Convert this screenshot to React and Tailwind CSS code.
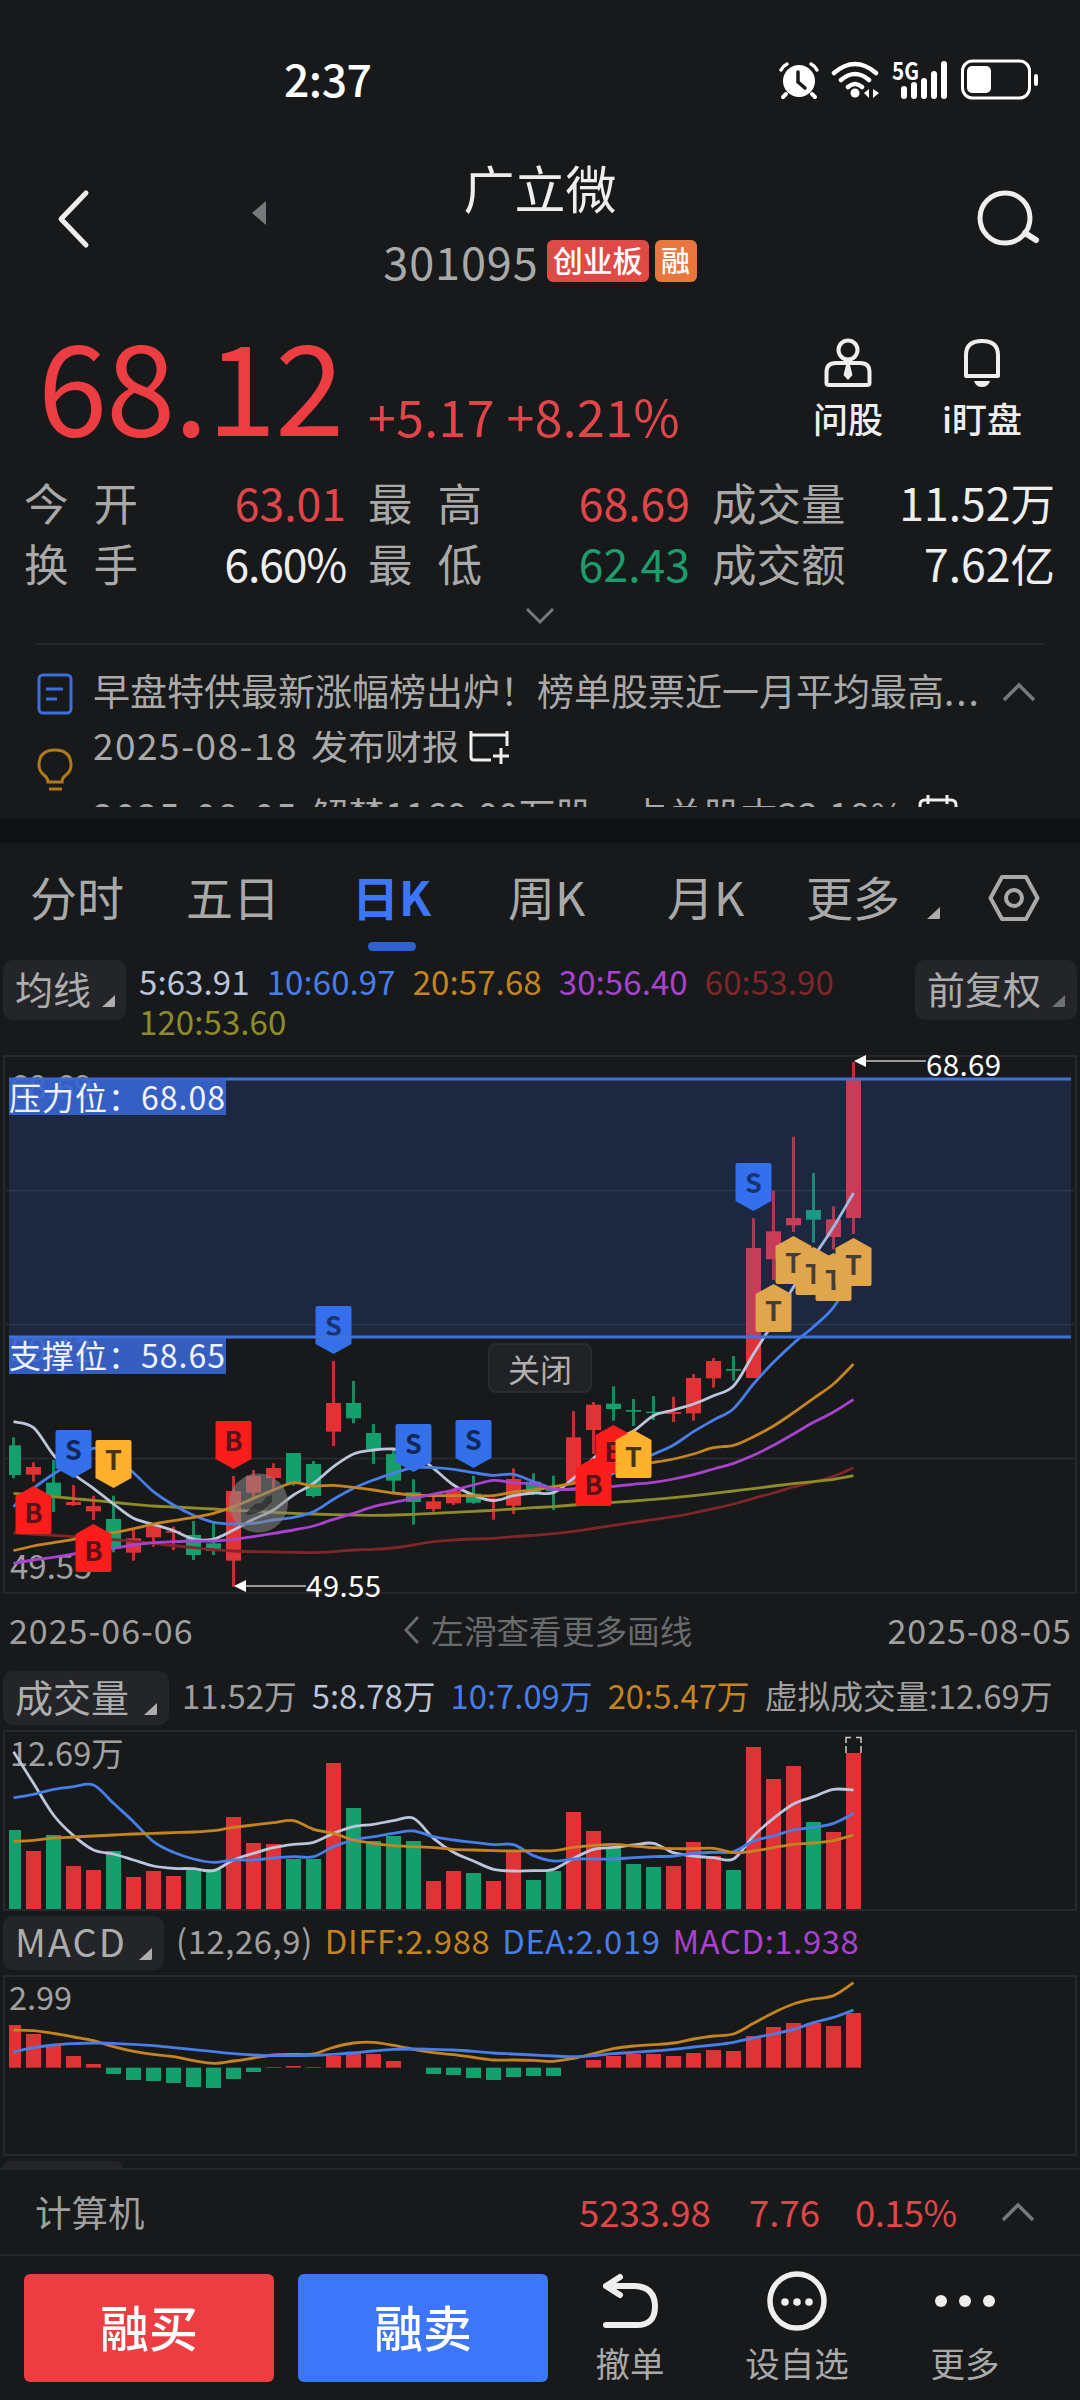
const RED = "#e03336"
const GREEN = "#14a06c"

const STEP = 20
const FIRST_X = 13.5
const xAt = (i) => FIRST_X + i * STEP

// [up, high, low, bodyTop, bodyBottom], thirds of a pixel like the lines below
const candles = [
  [0, 322, 445, 346, 435], [1, 397, 455, 411, 434], [0, 390, 546, 458, 502], [1, 465, 527, 516, 525],
  [1, 497, 570, 528, 544], [0, 497, 667, 567, 655], [1, 600, 692, 625, 668], [1, 580, 650, 588, 622],
  [1, 590, 660, 603, 608], [0, 573, 690, 615, 675], [0, 580, 675, 640, 663], [1, 438, 770, 483, 692],
  [1, 420, 505, 437, 488], [1, 400, 480, 414, 444], [0, 369, 467, 369, 460], [0, 393, 502, 402, 498],
  [1, 93, 348, 219, 305], [0, 153, 280, 219, 265], [0, 282, 402, 309, 358], [0, 360, 488, 372, 452],
  [0, 448, 584, 487, 516], [1, 500, 545, 514, 537], [1, 475, 525, 483, 520], [0, 437, 521, 491, 518],
  [1, 505, 569, 505, 510], [1, 415, 552, 447, 527], [0, 430, 495, 455, 492], [0, 437, 540, 478, 484],
  [1, 243, 456, 322, 456], [1, 216, 372, 224, 300], [0, 169, 272, 221, 237], [0, 207, 288, 240, 245],
  [0, 198, 270, 245, 249], [1, 200, 276, 246, 252], [1, 132, 272, 144, 250], [1, 84, 173, 93, 145],
  [0, 78, 152, 117, 122], [1, -335, 144, -246, 144], [1, -418, -150, -296, -212], [1, -580, -294, -336, -314],
  [0, -471, -262, -360, -331], [1, -371, -242, -332, -279], [1, -804, -288, -753, -336],
]

const averages = [
  {
    color: "#80262a",
    points: [608, 613, 616, 620, 624, 629, 634, 640, 647, 653, 659, 663, 665, 666, 667, 668, 665, 660, 658, 654, 645, 635, 630, 627, 625, 620, 616, 611, 604, 595, 586, 577, 569, 560, 549, 536, 522, 505, 489, 471, 456, 439, 413],
  },
  {
    color: "#8e8c2a",
    points: [490, 496, 500, 506, 511, 517, 523, 528, 531, 534, 537, 541, 543, 547, 550, 552, 554, 555, 556, 555, 553, 550, 547, 544, 541, 537, 533, 530, 525, 521, 517, 513, 508, 503, 497, 490, 483, 476, 468, 461, 455, 448, 437],
  },
  {
    color: "#bbc6dc",
    points: [275, 293, 375, 432, 475, 522, 565, 583, 602, 627, 627, 600, 568, 540, 495, 460, 410, 372, 360, 357, 370, 415, 465, 495, 512, 497, 489, 488, 445, 385, 330, 303, 257, 240, 222, 197, 168, 72, -24, -129, -219, -309, -411],
  },
  {
    color: "#477ee9",
    points: [530, 475, 432, 395, 355, 375, 428, 485, 525, 556, 577, 582, 580, 570, 562, 545, 508, 475, 450, 430, 413, 413, 418, 428, 436, 433, 455, 475, 477, 460, 430, 400, 373, 345, 305, 270, 236, 162, 97, 40, -10, -68, -165],
  },
  {
    color: "#c48420",
    points: [662, 648, 638, 628, 615, 608, 596, 582, 572, 562, 550, 530, 505, 480, 458, 468, 466, 472, 480, 489, 495, 497, 497, 497, 497, 486, 480, 470, 460, 445, 425, 405, 397, 387, 372, 353, 346, 320, 288, 248, 205, 162, 102],
  },
  {
    color: "#a843d0",
    points: [700, 690, 682, 672, 662, 655, 645, 638, 635, 633, 633, 628, 620, 610, 600, 588, 568, 550, 530, 517, 505, 492, 480, 465, 451, 458, 462, 477, 478, 474, 469, 463, 457, 447, 434, 417, 400, 376, 346, 312, 277, 246, 208],
  },
]

// [index, letter, y, direction]
const markers = [
  [1, "B", 436, "up"], [3, "S", 380, "down"], [4, "B", 474, "up"], [5, "T", 390, "down"],
  [11, "B", 371, "down"], [16, "S", 256, "down"], [20, "S", 374, "down"], [23, "S", 370, "down"],
  [30, "B", 375, "up"], [29, "B", 408, "up"], [31, "T", 380, "up"], [37, "S", 113, "down"],
  [38, "T", 234, "up"], [39, "T", 186, "up"], [40, "T", 197, "up"], [41, "T", 203, "up"], [42, "T", 188, "up"],
]

const markerColors = {
  B: ["#fb1d1c", "#5a1216"],
  S: ["#3370ea", "#12285a"],
  T: ["#ffb02c", "#46340f"],
}

const volumes = [
  [0, 510], [1, 573], [0, 525], [1, 618], [1, 630], [0, 573], [1, 651], [1, 633], [1, 648], [0, 630], [0, 627],
  [1, 471], [1, 549], [1, 552], [0, 597], [0, 597], [1, 309], [0, 444], [0, 543], [0, 528], [0, 543], [1, 663],
  [1, 633], [0, 639], [1, 663], [1, 576], [0, 660], [0, 633], [1, 456], [1, 513], [0, 562], [0, 612], [0, 621],
  [1, 618], [1, 546], [1, 588], [0, 630], [1, 261], [1, 357], [1, 318], [0, 486], [1, 516], [1, 279],
]

const volumeLines = [
  {
    color: "#bbc6dc",
    points: [275, 370, 465, 527, 570, 582, 600, 618, 625, 626, 632, 600, 580, 563, 553, 547, 520, 500, 493, 482, 475, 535, 577, 603, 628, 633, 632, 628, 595, 568, 562, 555, 550, 578, 588, 593, 597, 528, 475, 432, 410, 388, 390],
  },
  {
    color: "#477ee9",
    points: [413, 403, 388, 380, 375, 430, 485, 545, 577, 597, 607, 600, 600, 594, 590, 590, 560, 540, 530, 520, 513, 530, 540, 547, 554, 554, 587, 603, 597, 597, 597, 593, 590, 588, 580, 577, 575, 543, 528, 510, 502, 490, 460],
  },
  {
    color: "#c48420",
    points: [544, 541, 534, 531, 528, 525, 522, 520, 518, 516, 512, 502, 495, 488, 482, 508, 520, 540, 550, 557, 560, 563, 568, 570, 572, 573, 572, 572, 562, 556, 553, 558, 563, 566, 566, 565, 578, 573, 563, 553, 549, 542, 525],
  },
]

const histogram = [
  375, 402, 435, 468, 492, 522, 540, 543, 549, 561, 564, 537, 516, 501, 498, 501, 468, 455, 462, 483, 503, 522,
  525, 534, 540, 531, 528, 528, 503, 480, 468, 462, 462, 468, 459, 450, 453, 408, 381, 369, 369, 378, 339,
]

const macdLines = [
  {
    color: "#c48420",
    points: [390, 392, 400, 411, 422, 440, 454, 463, 470, 482, 490, 483, 474, 465, 463, 462, 442, 429, 427, 436, 448, 458, 464, 472, 480, 480, 481, 484, 475, 461, 446, 438, 434, 429, 417, 408, 402, 370, 338, 312, 297, 287, 248],
  },
  {
    color: "#477ee9",
    points: [456, 443, 435, 431, 429, 430, 433, 437, 443, 449, 455, 461, 465, 467, 467, 466, 463, 459, 453, 448, 447, 448, 450, 454, 459, 462, 465, 468, 470, 467, 461, 457, 453, 448, 441, 435, 427, 414, 402, 388, 368, 352, 330],
  },
]

// smooth path through the points, raw values are thirds of a pixel
function linePath(points, offset) {
  const p = points.map((v, i) => [xAt(i), v / 3 + offset])
  let d = `M${p[0][0]} ${p[0][1]}`
  for (let i = 0; i < p.length - 1; i++) {
    const a = p[i - 1] || p[i]
    const b = p[i]
    const c = p[i + 1]
    const e = p[i + 2] || c
    d += `C${b[0] + (c[0] - a[0]) / 6} ${b[1] + (c[1] - a[1]) / 6} ${c[0] - (e[0] - b[0]) / 6} ${c[1] - (e[1] - b[1]) / 6} ${c[0]} ${c[1]}`
  }
  return d
}

function Lines({ lines, offset }) {
  return lines.map((line) => (
    <path key={line.color} d={linePath(line.points, offset)} fill="none" stroke={line.color} strokeWidth="2.8" />
  ))
}

function Marker({ index, letter, y, direction }) {
  const [fill, ink] = markerColors[letter]
  const shape = direction === "down"
    ? "M-16 0H16Q18 0 18 2V38L0 48L-18 38V2Q-18 0 -16 0Z"
    : "M0 0L18 10V46Q18 48 16 48H-16Q-18 48 -18 46V10Z"
  return (
    <g transform={`translate(${xAt(index)} ${y})`}>
      <path d={shape} fill={fill} />
      <text x="0" y={direction === "down" ? 30 : 37} textAnchor="middle" fontSize="27" fontWeight="700" fill={ink}>
        {letter}
      </text>
    </g>
  )
}

function Corner({ className = "text-[#adadad]" }) {
  return (
    <svg viewBox="0 0 13 13" className={`h-[13px] w-[13px] ${className}`}>
      <path d="M13 1V11.5Q13 13 11.5 13H0Z" fill="currentColor" />
    </svg>
  )
}

function ChevronUp() {
  return (
    <svg viewBox="0 0 36 22" className="h-[22px] w-9 text-[#77787a]">
      <path d="M3 19L18 4L33 19" fill="none" stroke="currentColor" strokeWidth="3.5" />
    </svg>
  )
}

function StatusBar() {
  return (
    <div className="flex h-[157px] items-start pt-[55px]">
      <span className="ml-[284px] text-[44.5px] font-medium leading-[46px] tracking-[-0.5px] text-white">2:37</span>
      <svg viewBox="775 55 270 50" className="ml-auto mr-[35px] h-[50px] w-[270px]">
        <g fill="none" stroke="#fff" strokeLinecap="round">
          <path d="M781 70Q783 66 787 64M817 70Q815 66 811 64" strokeWidth="3.5" />
          <path d="M786 94L783 97M812 94L815 97" strokeWidth="4" />
          <circle cx="799" cy="81" r="16" fill="#fff" stroke="none" />
          <path d="M798 72V82L805 88" stroke="#17191a" strokeWidth="3.5" />
          <path d="M834 73Q855 55 876 73M841 80Q855 68 869 80M848 87Q855 81 862 87" strokeWidth="4.5" />
          <circle cx="855" cy="93" r="4.5" fill="#fff" stroke="none" />
        </g>
        <path d="M869 89V98L864 93ZM873 89V98L879 93Z" fill="#fff" />
        <text x="892" y="80" fontSize="24" fontWeight="700" fill="#fff" textLength="27" lengthAdjust="spacingAndGlyphs">5G</text>
        <path d="M904 89V96M914 85V96M924 81V96M934 74V96M944 64V96" stroke="#fff" strokeWidth="6" strokeLinecap="round" />
        <rect x="962.5" y="61" width="67" height="37" rx="10" fill="none" stroke="#fff" strokeWidth="3" />
        <rect x="967" y="66" width="24" height="27" rx="5" fill="#fff" />
        <path d="M1036 76V84" stroke="#fff" strokeWidth="4" strokeLinecap="round" />
      </svg>
    </div>
  )
}

function Header() {
  return (
    <header className="flex h-[153px] justify-between px-10">
      <div className="flex w-[240px]">
        <svg viewBox="0 0 40 64" className="ml-[13px] mt-[30px] h-16 w-10">
          <path d="M33 6L8 32L33 58" fill="none" stroke="#eee" strokeWidth="5" strokeLinecap="round" strokeLinejoin="round" />
        </svg>
        <svg viewBox="0 0 14 24" className="ml-[159px] mt-[44px] h-6 w-[14px]">
          <path d="M14 0V24L0 12Z" fill="#77787a" />
        </svg>
      </div>
      <div className="flex flex-col items-center pt-[4px]">
        <h1 className="text-[51px] leading-[52px] text-[#eee]">广立微</h1>
        <div className="mt-[27px] flex h-[42px] items-center">
          <span className="mr-2 text-[45px] leading-[42px] tracking-[0.9px] text-[#a9a9a9]">301095</span>
          <span className="mr-[6px] flex h-[42px] w-[102px] items-center justify-center rounded-[6px] bg-[#e04a46] pb-[3px] text-[30px] font-medium text-white">创业板</span>
          <span className="flex h-[42px] w-[42px] items-center justify-center rounded-[6px] bg-[#e8763e] pb-[3px] text-[29px] font-medium text-white">融</span>
        </div>
      </div>
      <div className="flex w-[240px] justify-end">
        <svg viewBox="0 0 64 58" className="mt-[33px] h-[58px] w-16">
          <circle cx="29" cy="28" r="25" fill="none" stroke="#eee" strokeWidth="5" />
          <path d="M49 43L60 50" stroke="#eee" strokeWidth="6" strokeLinecap="round" />
        </svg>
      </div>
    </header>
  )
}

function Price() {
  return (
    <div className="flex h-[161px] items-start">
      <span className="ml-[38px] mt-[20px] w-[330px] text-[125px] leading-[104px] tracking-[-1.500px] text-[#ec3d42]">68.12</span>
      <span className="mt-[83px] text-[50px] leading-[44px] tracking-[0.4px] text-[#e04549]">+5.17 +8.21%</span>
      <div className="ml-auto mt-[27px] flex gap-[59px] pr-[58px]">
        <div className="flex flex-col items-center">
          <svg viewBox="0 0 50 52" className="h-[52px] w-[50px]" fill="none" stroke="#eee" strokeWidth="4">
            <circle cx="25" cy="13" r="9.5" />
            <path d="M3.500 46V35Q3.500 26 13 26H37Q46.500 26 46.500 35V46Q46.500 48 44 48H6Q3.500 48 3.500 46Z" />
            <path d="M23 28H27L29.500 38L25 43L20.500 38Z" fill="#eee" stroke="none" />
          </svg>
          <span className="mt-[9px] text-[35px] font-medium leading-[40px] text-[#eee]">问股</span>
        </div>
        <div className="flex flex-col items-center">
          <svg viewBox="0 0 50 52" className="h-[52px] w-[50px]" fill="none" stroke="#eee" strokeWidth="4">
            <path d="M9 39V18Q9 4 25 4T41 18V39Z" strokeLinejoin="round" />
            <path d="M17 44H33Q31 50 25 50T17 44Z" fill="#eee" stroke="none" />
          </svg>
          <span className="mt-[9px] text-[35px] font-medium leading-[40px] text-[#eee]">i盯盘</span>
        </div>
      </div>
    </div>
  )
}

const stats = [
  ["今 开", "63.01", "text-[#e04549]", "最 高", "68.69", "text-[#e04549]", "成交量", "11.52万"],
  ["换 手", "6.60%", "text-[#eee] tracking-[-1.2px]", "最 低", "62.43", "text-[#1d9c6c]", "成交额", "7.62亿"],
]

function Stats() {
  return (
    <div className="flex flex-col text-[44.5px]">
      {stats.map((row) => (
        <div key={row[0]} className="flex h-[61px] items-center leading-[61px] text-[#a9a9a9]">
          <span className="ml-[24px] w-[120px] [word-spacing:15px]">{row[0]}</span>
          <span className={`w-[202px] text-right ${row[2]}`}>{row[1]}</span>
          <span className="ml-[22px] w-[120px] [word-spacing:15px]">{row[3]}</span>
          <span className={`w-[202px] text-right ${row[5]}`}>{row[4]}</span>
          <span className="ml-[22px]">{row[6]}</span>
          <span className="ml-auto mr-[25px] text-[#eee]">{row[7]}</span>
        </div>
      ))}
      <svg viewBox="0 0 28 18" className="mx-auto mt-[14px] h-[18px] w-7">
        <path d="M1 2L14 15L27 2" fill="none" stroke="#77787a" strokeWidth="3" />
      </svg>
    </div>
  )
}

function Notices() {
  return (
    <div className="mx-[35px] mt-[18px] flex h-[176px] border-t-2 border-[#26282a]">
      <div className="flex w-[58px] flex-col pl-[2px]">
        <svg viewBox="0 0 36 42" className="mt-[28px] h-[42px] w-9" fill="none" stroke="#3d6fdf" strokeWidth="3">
          <rect x="2" y="2" width="32" height="38" rx="4" />
          <path d="M9 16H26M9 26H20" />
        </svg>
        <svg viewBox="0 0 36 44" className="mt-[33px] h-11 w-9" fill="none" stroke="#b07a18" strokeWidth="3">
          <path d="M11 34Q11 30 7 27Q2 23 2 17.500Q2 2 18 2T34 17.500Q34 23 29 27Q25 30 25 34ZM12 41H25" />
        </svg>
      </div>
      <div className="flex flex-1 flex-col text-[37px] text-[#a9a9a9]">
        <div className="flex h-[86px] items-start pt-[22px]">
          <span className="leading-[46px]">早盘特供最新涨幅榜出炉！榜单股票近一月平均最高<span className="tracking-[2px]">...</span></span>
          <span className="ml-auto mr-[8px] mt-[14px]"><ChevronUp /></span>
        </div>
        <div className="h-[76px] overflow-hidden">
          <div className="mt-[-10px] flex h-[70px] items-start leading-[46px]">
            <span className="w-[218px] tracking-[1.5px]">2025-08-18</span>
            <span>发布财报</span>
            <svg viewBox="0 0 44 44" className="ml-[8px] h-11 w-11" fill="none" stroke="#eee" strokeWidth="3">
              <path d="M40 25V5H4V36Q4 39 7 39H24M4 14H40M34 27V43M26 35H42" />
            </svg>
          </div>
          <div className="flex items-start leading-[46px]">
            <span className="w-[218px] tracking-[1.5px]">2025-08-05</span>
            <span>解禁1160.00万股，占总股本32.18%</span>
            <svg viewBox="0 0 44 44" className="ml-[12px] mt-[3px] h-11 w-11" fill="none" stroke="#eee" strokeWidth="3">
              <path d="M4 14V11Q4 6 9 6H35Q40 6 40 11V38H4ZM12 1V10M31 1V10" />
            </svg>
          </div>
        </div>
      </div>
    </div>
  )
}

function PeriodTabs() {
  return (
    <nav className="relative flex h-[116px] items-center pb-[10px] text-[47px] leading-[56px] text-[#a9a9a9]">
      <span className="ml-[30px] w-[156px]">分时</span>
      <span className="w-[166px]">五日</span>
      <span className="w-[156px] font-bold text-[#3e76fb]">日K</span>
      <span className="w-[159px]">周K</span>
      <span className="w-[139px]">月K</span>
      <span>更多</span>
      <span className="ml-[27px] mt-[33px]"><Corner /></span>
      <svg viewBox="0 0 52 48" className="ml-[48px] mt-[3px] h-12 w-[52px]" fill="none" stroke="#a9a9a9" strokeWidth="4">
        <path d="M14 3H38L49.500 24L38 45H14L2.500 24Z" strokeLinejoin="round" />
        <circle cx="26" cy="24" r="8" />
      </svg>
      <span className="absolute left-[368px] top-[99px] h-[9px] w-12 rounded-full bg-[#2f62cf]" />
    </nav>
  )
}

function Pill({ children, className, corner }) {
  return (
    <div className={`flex shrink-0 items-center rounded-[10px] bg-[#242529] text-[38px] text-[#adadad] ${className}`}>
      <span className="relative top-[-2px] leading-[50px]">{children}</span>
      <span className="ml-auto mt-[21px]"><Corner className={corner} /></span>
    </div>
  )
}

function MaRow() {
  return (
    <div className="flex h-[91px] items-start px-[3px]">
      <Pill className="mt-px h-[60px] w-[123px] pl-[12px] pr-[11px]">均线</Pill>
      <div className="ml-[13px] flex w-[720px] flex-wrap gap-x-[17px] pt-[2px] text-[33px] leading-[40px] tracking-[0.1px]">
        <span className="text-[#bbc6dc]">5:63.91</span>
        <span className="text-[#477ee9]">10:60.97</span>
        <span className="text-[#c48420]">20:57.68</span>
        <span className="text-[#a843d0]">30:56.40</span>
        <span className="text-[#80262a]">60:53.90</span>
        <span className="text-[#8e8c2a]">120:53.60</span>
      </div>
      <Pill className="ml-auto mt-px h-[60px] w-[162px] pl-[12px] pr-[12px]" corner="text-[#707173]">前复权</Pill>
    </div>
  )
}

function PriceChart() {
  return (
    <div className="relative h-[560px]">
      <svg viewBox="0 0 1080 560" className="block h-[560px] w-[1080px]">
        <rect x="4" y="6" width="1072" height="537" fill="none" stroke="#26282b" strokeWidth="2" />
        <path d="M6 140.500H1074M6 274.500H1074M6 408.500H1074" stroke="#2c2e31" strokeWidth="1.500" />
        <g fontSize="33" fill="#a0a0a0">
          <text x="10" y="49">68.69</text>
          <text x="10" y="312">59.12</text>
          <text x="10" y="529">49.55</text>
        </g>
        <clipPath id="plot"><rect x="9" y="0" width="1062" height="560" /></clipPath>
        <g clipPath="url(#plot)">
          {candles.map(([up, high, low, top, bottom], i) => (
            <g key={i} fill={up ? RED : GREEN}>
              <rect x={xAt(i) - 1.5} y={high / 3 + 280} width="3" height={(low - high) / 3} opacity="0.85" />
              <rect x={xAt(i) - 7.5} y={top / 3 + 280} width="15" height={(bottom - top) / 3} />
            </g>
          ))}
        </g>
        <Lines lines={averages} offset={280} />
        {markers.map(([index, letter, y, direction]) => (
          <Marker key={index} index={index} letter={letter} y={y} direction={direction} />
        ))}
        <rect x="9" y="29" width="1062" height="258" fill="#3f72ff" opacity="0.165" />
        <path d="M9 29H1071M9 287H1071" stroke="#3f72da" strokeWidth="3" />
        <path d="M9 28H226V65H9ZM9 288H226V324H9Z" fill="#3966d2" opacity="0.9" />
        <g fontSize="32" fill="#f0f3fa">
          <text x="9" y="60" textLength="216">压力位：68.08</text>
          <text x="9" y="318" textLength="216">支撑位：58.65</text>
        </g>
        <circle cx="258.500" cy="453" r="29.500" fill="#8a8a8a" opacity="0.55" />
        <path d="M245 464L255 454L262 453L266 447L272 445V452L262 461L250 465Z" fill="#2b2c2e" opacity="0.75" />
        <g fontSize="29.500" fill="#fff">
          <path d="M865 11H926M245 536H306" stroke="#999" strokeWidth="2" />
          <path d="M854 11L866 5V17ZM234 536L246 530V542Z" />
          <text x="926" y="26" textLength="75">68.69</text>
          <text x="306" y="547" textLength="75">49.55</text>
        </g>
      </svg>
      <button type="button" className="absolute left-[488px] top-[293px] h-[50px] w-[104px] rounded-[8px] border-2 border-[#2a2c2f] bg-[#202225] text-[32px] leading-[42px] text-[#b0b0b0]">
        关闭
      </button>
    </div>
  )
}

function DateAxis() {
  return (
    <div className="flex h-[61px] items-center pb-[22px] pl-[9px] pr-[8px] text-[34px] leading-[38px] text-[#a0a0a0]">
      <span className="w-[394px] tracking-[1px]">2025-06-06</span>
      <svg viewBox="0 0 18 28" className="mr-[10px] h-7 w-[18px]">
        <path d="M15 1L3 14L15 27" fill="none" stroke="#6a6b6d" strokeWidth="3" />
      </svg>
      <span className="text-[32.7px] text-[#6a6b6d]">左滑查看更多画线</span>
      <span className="ml-auto tracking-[1px]">2025-08-05</span>
    </div>
  )
}

function VolumePanel() {
  return (
    <section>
      <div className="flex h-[59px] items-start px-[3px] text-[32.8px] leading-[48px] text-[#a0a0a0]">
        <Pill className="h-[54px] w-[166px] pl-[12px] pr-[12px]">成交量</Pill>
        <div className="ml-[13px] flex gap-[15px]">
          <span>11.52万</span>
          <span className="text-[#bbc6dc]">5:8.78万</span>
          <span className="text-[#477ee9]">10:7.09万</span>
          <span className="text-[#c48420]">20:5.47万</span>
          <span>虚拟成交量:12.69万</span>
        </div>
      </div>
      <svg viewBox="0 0 1080 186" className="block h-[186px] w-[1080px]">
        <rect x="4" y="1" width="1072" height="179" fill="none" stroke="#26282b" strokeWidth="2" />
        {volumes.map(([up, v], i) => (
          <rect key={i} x={i ? xAt(i) - 7.5 : 9} y={v / 3 - 70} width={i ? 15 : 12} height={(747 - v) / 3} fill={up ? RED : GREEN} />
        ))}
        <text x="10" y="36" fontSize="32.500" fill="#a0a0a0">12.69万</text>
        <Lines lines={volumeLines} offset={-70} />
        <path d="M846 23V16M846 13V7.500H851M856 7.500H861V13M861 16V23" fill="none" stroke="#ccc" strokeWidth="1.500" />
      </svg>
    </section>
  )
}

function MacdPanel() {
  return (
    <section>
      <div className="flex h-[59px] items-start px-[3px] text-[32.8px] leading-[48px]">
        <Pill className="h-[54px] w-[161px] pl-[12px] pr-[12px] tracking-[2px]">MACD</Pill>
        <div className="ml-[12px] flex gap-[12px] tracking-[0.6px]">
          <span className="text-[#a0a0a0]">(12,26,9)</span>
          <span className="text-[#c48420]">DIFF:2.988</span>
          <span className="text-[#477ee9]">DEA:2.019</span>
          <span className="text-[#a843d0]">MACD:1.938</span>
        </div>
      </div>
      <svg viewBox="0 0 1080 186" className="block h-[186px] w-[1080px]">
        <rect x="4" y="1" width="1072" height="179" fill="none" stroke="#26282b" strokeWidth="2" />
        {histogram.map((v, i) => (
          <rect key={i} x={i ? xAt(i) - 7.5 : 9} y={Math.min(v, 503) / 3 - 75} width={i ? 15 : 12} height={Math.abs(503 - v) / 3} fill={v < 503 ? RED : GREEN} />
        ))}
        <text x="9" y="35" fontSize="32.500" fill="#a0a0a0">2.99</text>
        <Lines lines={macdLines} offset={-75} />
      </svg>
      <div className="h-[7px] pl-[3px]">
        <div className="h-[7px] w-[120px] rounded-t-[10px] bg-[#242529]" />
      </div>
    </section>
  )
}

function SectorBar() {
  return (
    <div className="flex h-[88px] items-center border-y-2 border-[#26282b] pl-[35px] pr-[44px] text-[36.5px] leading-[50px] text-[#e04549]">
      <span className="text-[#a0a0a0]">计算机</span>
      <span className="ml-auto w-[170px]">5233.98</span>
      <span className="w-[106px]">7.76</span>
      <span className="w-[145px] tracking-[-0.6px]">0.15%</span>
      <ChevronUp />
    </div>
  )
}

function BottomBar() {
  return (
    <div className="flex h-[144px] pl-[24px] pt-[18px]">
      <button type="button" className="h-[108px] w-[250px] rounded-[6px] bg-[#ec3d42] pb-[4px] text-[49px] font-medium text-white">融买</button>
      <button type="button" className="ml-6 h-[108px] w-[250px] rounded-[6px] bg-[#3e76fb] pb-[4px] text-[49px] font-medium text-white">融卖</button>
      <div className="ml-[37px] flex flex-1 text-[34.5px] leading-[40px] text-[#a9a9a9]">
        <div className="flex w-[90px] flex-col items-center">
          <svg viewBox="0 0 60 60" className="mt-[-3px] h-[60px] w-[60px]" fill="none" stroke="#eee" strokeWidth="6" strokeLinecap="round" strokeLinejoin="round">
            <path d="M20 6L6 15L20 24M6 15H35Q55 16 55 35.500T35 54H6" />
          </svg>
          <span className="mt-[11px]">撤单</span>
        </div>
        <div className="ml-[57px] flex w-[130px] flex-col items-center">
          <svg viewBox="0 0 60 60" className="mt-[-3px] h-[60px] w-[60px]">
            <circle cx="30" cy="30" r="27" fill="none" stroke="#eee" strokeWidth="5.500" />
            <circle cx="18" cy="31" r="3.800" fill="#eee" />
            <circle cx="30" cy="31" r="3.800" fill="#eee" />
            <circle cx="42" cy="31" r="3.800" fill="#eee" />
          </svg>
          <span className="mt-[11px]">设自选</span>
        </div>
        <div className="ml-[58px] flex w-[90px] flex-col items-center">
          <svg viewBox="0 0 62 60" className="mt-[-3px] h-[60px] w-[62px]">
            <circle cx="7" cy="30" r="6" fill="#eee" />
            <circle cx="31" cy="30" r="6" fill="#eee" />
            <circle cx="55" cy="30" r="6" fill="#eee" />
          </svg>
          <span className="mt-[11px]">更多</span>
        </div>
      </div>
    </div>
  )
}

function App() {
  return (
    <main className="h-[2400px] w-[1080px] overflow-hidden bg-[#17191a] font-['Noto_Sans_CJK_SC',sans-serif] whitespace-nowrap">
      <StatusBar />
      <Header />
      <Price />
      <Stats />
      <Notices />
      <div className="h-6 bg-[#101112]" />
      <PeriodTabs />
      <MaRow />
      <PriceChart />
      <DateAxis />
      <VolumePanel />
      <MacdPanel />
      <SectorBar />
      <BottomBar />
    </main>
  )
}

export default App
